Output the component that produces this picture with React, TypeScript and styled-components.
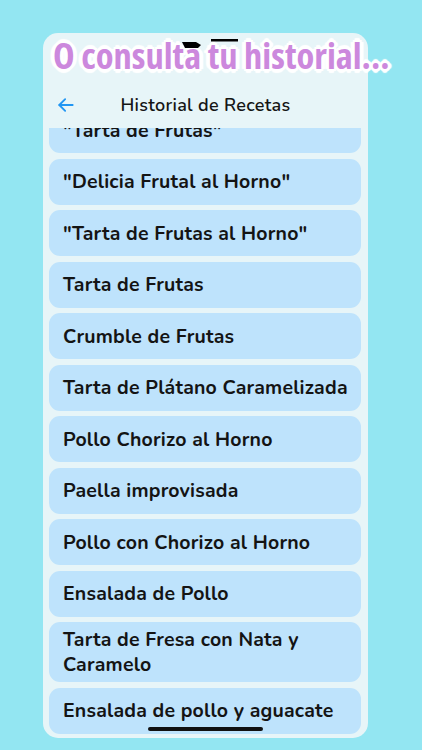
import { useLayoutEffect, useRef } from 'react'
import styled, { createGlobalStyle } from 'styled-components'

const GlobalStyle = createGlobalStyle`
    html, body {
        margin: 0;
        padding: 0;
        background: #93e6f2;
        overflow: hidden;
    }
    * {
        box-sizing: border-box;
    }
`

const recipes = [
    '"Tarta de Frutas"',
    '"Delicia Frutal al Horno"',
    '"Tarta de Frutas al Horno"',
    'Tarta de Frutas',
    'Crumble de Frutas',
    'Tarta de Plátano Caramelizada',
    'Pollo Chorizo al Horno',
    'Paella improvisada',
    'Pollo con Chorizo al Horno',
    'Ensalada de Pollo',
    'Tarta de Fresa con Nata y Caramelo',
    'Ensalada de pollo y aguacate',
]

const Page = styled.div`
    position: relative;
    width: 422px;
    height: 750px;
    padding: 33px 0 0 43px;
    font-family: Nunito, Lato, 'Noto Sans', sans-serif;
`

const Caption = styled.h1`
    position: absolute;
    top: 32px;
    left: 53px;
    margin: 0;
    z-index: 3;
    font-family: 'Open Sans', 'Liberation Sans', sans-serif;
    font-stretch: 75%;
    font-weight: 700;
    font-size: 36.5px;
    line-height: 46px;
    color: #cc88dd;
    white-space: nowrap;
    text-shadow:
        3px 0 0 #fff, -3px 0 0 #fff, 0 3px 0 #fff, 0 -3px 0 #fff,
        2px 2px 0 #fff, -2px 2px 0 #fff, 2px -2px 0 #fff, -2px -2px 0 #fff,
        4px 0 1px #fff, -4px 0 1px #fff, 0 4px 1px #fff, 0 -4px 1px #fff;
`

const StatusBits = styled.svg`
    position: absolute;
    top: 38px;
    left: 182px;
    z-index: 4;
`

const Phone = styled.div`
    position: relative;
    width: 325px;
    height: 705px;
    background: #e7f5f8;
    border-radius: 15px;
    display: flex;
    flex-direction: column;
    overflow: hidden;
`

const Header = styled.header`
    flex: 0 0 95px;
    padding-top: 52px;
`

const NavBar = styled.div`
    position: relative;
    height: 40px;
    display: flex;
    align-items: center;
    justify-content: center;
`

const BackButton = styled.button`
    position: absolute;
    left: 11px;
    top: 8px;
    width: 24px;
    height: 24px;
    padding: 0;
    border: 0;
    background: none;
    display: flex;
    align-items: center;
    justify-content: center;
`

const Title = styled.span`
    font-size: 18px;
    font-weight: 600;
    letter-spacing: 0.3px;
    color: #151515;
`

const List = styled.ul`
    flex: 1;
    margin: 0;
    padding: 0 7px 30px 6px;
    list-style: none;
    display: flex;
    flex-direction: column;
    gap: 5.5px;
    overflow: hidden;
`

const Item = styled.li`
    flex: 0 0 auto;
    min-height: 46px;
    padding: 5px 6px 5px 14px;
    display: flex;
    align-items: center;
    background: #bee3fc;
    border-radius: 11px;
    font-size: 19.5px;
    font-weight: 700;
    letter-spacing: 0.2px;
    line-height: 25px;
    color: #141414;
`

const HomeBar = styled.div`
    position: absolute;
    left: 105px;
    bottom: 7px;
    width: 115px;
    height: 4px;
    border-radius: 2px;
    background: #111;
`

const BackArrow = () => (
    <svg width="20" height="20" viewBox="0 0 24 24" fill="none" stroke="#2196f3" strokeWidth="2.2" strokeLinecap="round" strokeLinejoin="round">
        <path d="M20 12H4" />
        <path d="M11 5l-7 7 7 7" />
    </svg>
)

const App = () => {
    const listRef = useRef<HTMLUListElement>(null)

    // ** list is shown scrolled a little, first entry half hidden under the bar
    useLayoutEffect(() => {
        if (listRef.current) listRef.current.scrollTop = 21
    }, [])

    return (
        <>
            <GlobalStyle />
            <Page>
                <Caption>O consulta tu historial...</Caption>
                <StatusBits width="58" height="12" viewBox="0 0 58 12">
                    <path d="M0 4h14l5 3-3 3H3z" fill="#000" />
                    <rect x="29" y="1" width="27" height="2.5" fill="#000" />
                </StatusBits>
                <Phone>
                    <Header>
                        <NavBar>
                            <BackButton aria-label="Volver">
                                <BackArrow />
                            </BackButton>
                            <Title>Historial de Recetas</Title>
                        </NavBar>
                    </Header>
                    <List ref={listRef}>
                        {recipes.map((name, i) => (
                            <Item key={i}>{name}</Item>
                        ))}
                    </List>
                    <HomeBar />
                </Phone>
            </Page>
        </>
    )
}

export default App
